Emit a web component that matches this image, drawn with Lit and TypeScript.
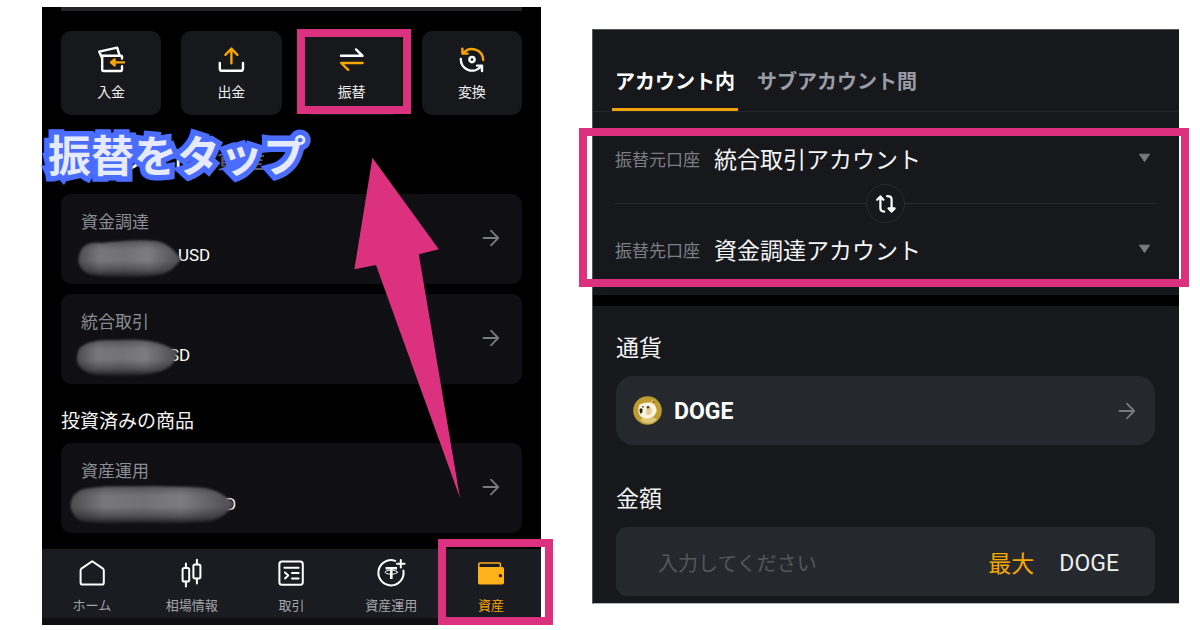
import { LitElement, html, svg, css, nothing } from "lit";
import { customElement, property, state } from "lit/decorators.js";
import { classMap } from "lit/directives/class-map.js";

const icons: Record<string, unknown> = {
  deposit: svg`
    <path class="w" d="M5.2 12.5 2.2 5.6 20.2 1.6 22.6 9.6M25 12.6V10.6Q25 9.7 24 9.7H5.2V23.6Q5.2 25 6.6 25H23.6Q25 25 25 23.6V20.2"/>
    <path class="o" d="M27 16.4H15M17.6 13.4 14 16.4 17.6 19.4Z"/>`,
  withdraw: svg`
    <path class="w" d="M2.8 17V22.4Q2.8 24.8 5.2 24.8H23.6Q26 24.8 26 22.4V17"/>
    <path class="o" d="M14.4 17.2V2.6M8.4 8.8 14.4 2.6 20.4 8.8"/>`,
  transfer: svg`
    <path class="w" d="M3 9.8H24.6L18 3.4"/>
    <path class="o" d="M24.6 17H3.2L10.2 23.8"/>`,
  convert: svg`
    <path class="o" d="M4.4 2.6V7.6H9.6M5.2 7.2A11.3 11.3 0 0 1 25.2 14"/>
    <path class="w" d="M24 25V19.6H19M2.8 13A11.3 11.3 0 0 0 22.6 20.8"/>
    <circle class="w" cx="14" cy="13.6" r="2.6"/>`,
  home: svg`<path class="w" d="M14.2 2.2 25 9.6Q25.8 10.4 25.8 11.4V23.4Q25.8 25.6 23.6 25.6H4.8Q2.6 25.6 2.6 23.4V11.4Q2.6 10.4 3.4 9.6Z"/>`,
  market: svg`
    <rect class="w" x="4.6" y="9" width="6.6" height="13.6" rx="1.6"/>
    <rect class="w" x="15.4" y="5.4" width="7" height="14" rx="1.6"/>
    <path class="w" d="M7.9 4.4V9M7.9 22.6V27.4M18.9 .8V5.4M18.9 19.4V24.4"/>`,
  trade: svg`
    <rect class="w" x="2.4" y="2.4" width="23.4" height="23.4" rx="2.6"/>
    <path class="w" d="M7.4 8.8H21.6M15 14H21.6M15 19.4H21.6M8 13.4 11.2 16.4 8 19.4"/>`,
  earn: svg`
    <path class="w" d="M18.2 1.9A12.6 12.6 0 1 0 26.4 11.6"/>
    <path class="w" d="M23.8 1V8.6M20 4.8H27.6"/>
    <path class="t" d="M8.6 9.2H20M14.3 9.2V20"/>
    <ellipse class="thin" cx="14.3" cy="13.2" rx="6.2" ry="2"/>`,
  wallet: svg`
    <path class="f" d="M1 8H25.4Q27 8 27 9.6V23.8Q27 25.4 25.4 25.4H2.6Q1 25.4 1 23.8Z"/>
    <path class="g" d="M1.8 9V5.2Q1.8 4 3 4H22.2Q23.4 4 23.4 5.2V8"/>
    <circle class="dot" cx="23.4" cy="16.7" r="1.6"/>`,
};

const icon = (name: string) =>
  html`<svg class="icon ${name}" width="28" height="28" viewBox="0 0 28 28" aria-hidden="true">${icons[name]}</svg>`;

const arrow = html`<svg class="arrow" width="18" height="18" viewBox="0 0 18 18" aria-hidden="true">
  <path d="M1.5 9H16M9 1.6 16.2 9 9 16.4"/>
</svg>`;

const family = css`"Noto Sans CJK JP", "Noto Sans", sans-serif`;

const shared = css`
  * { box-sizing: border-box; }
  button, select, input {
    font: inherit; color: inherit; background: none; border: 0;
    margin: 0; padding: 0; border-radius: 0; outline: 0; text-align: left; appearance: none;
  }
  h2, h3, p { margin: 0; font-weight: 400; }
  svg { display: block; flex: none; }
  .arrow { fill: none; stroke: #777a7e; stroke-width: 1.8; stroke-linejoin: round; stroke-linecap: round; }
`;

interface Balance { label: string; offset: number; mask: { x: number; y: number; w: number; d: string } }

/* Redacted amounts: the smear covers the digits and leaves the unit partly visible. */
const balances: Record<string, Balance> = {
  funding: {
    label: "資金調達", offset: 97,
    mask: { x: 15, y: 45, w: 106, d: "M4 14C7 4 16 3 26 4C42 2 62 0 80 2C93 4 98 12 105 20C98 30 92 35 78 37C54 39 30 39 16 36C4 33 0 23 4 14Z" },
  },
  unified: {
    label: "統合取引", offset: 77,
    mask: { x: 15, y: 44, w: 102, d: "M3 11C9 4 20 2 34 2C50 2 60 1 74 3C87 5 94 10 101 13C100 22 98 27 88 32C76 37 60 38 40 38C24 38 12 37 5 30C-1 24 1 17 3 11Z" },
  },
  earn: {
    label: "資産運用", offset: 123,
    mask: { x: 8, y: 42, w: 166, d: "M14 4C36 0 60 2 84 1C104 2 118 1 136 3C148 5 158 12 165 18C162 24 156 32 142 36C122 39 96 38 74 38C46 38 24 40 12 36C-2 29 -2 10 14 4Z" },
  },
};

@customElement("balance-card")
class BalanceCard extends LitElement {
  @property({ attribute: false }) item!: Balance;

  static styles = [shared, css`
    :host { display: block; }
    .card {
      position: relative; display: flex; align-items: center; justify-content: space-between;
      width: 100%; padding: 15px 22px 17px 20px; border-radius: 10px; background: #101014; cursor: pointer;
    }
    .text { display: flex; flex-direction: column; gap: 10px; }
    .label { font-size: 17px; line-height: 24px; color: #8b8d95; }
    .value { display: flex; font: 17px/24px Roboto, sans-serif; color: #fff; }
    .mask { position: absolute; overflow: visible; }
    .mask g { filter: blur(1px); }
  `];

  render() {
    const { label, offset, mask } = this.item;
    return html`<button class="card">
      <span class="text">
        <span class="label">${label}</span>
        <span class="value"><span style="width:${offset}px"></span>USD</span>
      </span>
      ${arrow}
      <svg class="mask" style="left:${mask.x}px;top:${mask.y}px" width=${mask.w} height="40" viewBox="0 0 ${mask.w} 40" aria-hidden="true">
        <defs>
          <linearGradient id="v" x1="0" y1="0" x2="0" y2="1">
            <stop offset="0" stop-color="#58585a"/><stop offset=".25" stop-color="#7c7c7e"/>
            <stop offset=".55" stop-color="#7e7e80"/><stop offset=".82" stop-color="#525254"/><stop offset="1" stop-color="#1c1c20"/>
          </linearGradient>
          <linearGradient id="h" x1="0" y1="0" x2="1" y2="0">
            <stop offset="0" stop-color="#101014" stop-opacity=".45"/><stop offset=".2" stop-color="#101014" stop-opacity=".05"/>
            <stop offset=".45" stop-color="#101014" stop-opacity=".1"/><stop offset=".68" stop-color="#101014" stop-opacity="0"/>
            <stop offset="1" stop-color="#101014" stop-opacity=".45"/>
          </linearGradient>
        </defs>
        <g><path fill="url(#v)" d=${mask.d}/><path fill="url(#h)" d=${mask.d}/></g>
      </svg>
    </button>`;
  }
}

@customElement("wallet-screen")
class WalletScreen extends LitElement {
  static styles = [shared, css`
    :host { display: block; position: relative; background: #000; color: #fff; }
    .peek { height: 4px; margin: 0 19px; background: #252527; }
    .body { display: flex; flex-direction: column; padding: 20px 19px 16px; }
    .actions { display: grid; grid-template-columns: repeat(4, 1fr); gap: 20px; }
    .action {
      position: relative; display: flex; flex-direction: column; align-items: center; gap: 7px;
      padding: 15px 0 14px; border-radius: 10px; background: #17181c; color: #eee;
      font-size: 14px; line-height: 20px; cursor: pointer;
    }
    .action.marked::after {
      content: ""; position: absolute; inset: -2px -9px 1px -5px; border: 8px solid #dc317e;
    }
    .icon { fill: none; stroke-linecap: round; stroke-linejoin: round; overflow: visible; }
    .w { stroke: #fff; stroke-width: 2.4; }
    .o { stroke: #f7a600; stroke-width: 2.4; }
    .tab .w { stroke-width: 2; }
    .t { stroke: #fff; stroke-width: 2.6; stroke-linecap: butt; }
    .thin { stroke: #fff; stroke-width: 1; }
    .deposit .o { fill: #f7a600; }
    .f { fill: #ffb11a; }
    .g { stroke: #ffb11a; stroke-width: 1.5; }
    .dot { fill: #1b1b22; }
    .views { display: flex; gap: 24px; margin: 28px 0 21px; padding-left: 12px; font-size: 24px; line-height: 30px; font-weight: 500; }
    .views .off { color: #5c5d63; }
    .cards { display: grid; gap: 10px; }
    .heading { margin: 22px 0 9px; font-size: 19px; line-height: 28px; color: #f2f2f2; }
    .tabs { display: grid; grid-template-columns: repeat(5, 1fr); background: #1b1b22; border-bottom: 7px solid #0f0f14; }
    .tab {
      position: relative; display: flex; flex-direction: column; align-items: center; gap: 8px;
      padding: 10px 0 3px; font-size: 13px; line-height: 20px; color: #a4a5aa; cursor: pointer;
    }
    .tab.active { color: #f7a600; }
    .tab.active::after {
      content: ""; position: absolute; inset: -10px -12px -7px -3px; border: 8px solid #dc317e;
    }
    .callout {
      position: absolute; left: 6px; top: 115px; white-space: nowrap; font-size: 43px; line-height: 62px; font-weight: 700;
      color: #e6eaff; -webkit-text-stroke: 11px #4a6dff; paint-order: stroke fill; stroke-linejoin: miter;
    }
    .pointer { position: absolute; left: 312px; top: 150px; fill: #dc317e; pointer-events: none; }
  `];

  private actions = [
    { id: "deposit", label: "入金" },
    { id: "withdraw", label: "出金" },
    { id: "transfer", label: "振替", marked: true },
    { id: "convert", label: "変換" },
  ];

  @state() private tab = "wallet";

  private tabs = [
    { id: "home", label: "ホーム" },
    { id: "market", label: "相場情報" },
    { id: "trade", label: "取引" },
    { id: "earn", label: "資産運用" },
    { id: "wallet", label: "資産" },
  ];

  render() {
    return html`
      <div class="peek"></div>
      <div class="body">
        <div class="actions">
          ${this.actions.map((a) => html`<button class=${classMap({ action: true, marked: !!a.marked })}>${icon(a.id)}<span>${a.label}</span></button>`)}
        </div>
        <div class="views"><span>アカウント</span><span class="off">資産</span></div>
        <div class="cards">
          <balance-card .item=${balances.funding}></balance-card>
          <balance-card .item=${balances.unified}></balance-card>
        </div>
        <h2 class="heading">投資済みの商品</h2>
        <balance-card .item=${balances.earn}></balance-card>
      </div>
      <nav class="tabs">
        ${this.tabs.map((t) => html`<button
          class=${classMap({ tab: true, active: t.id === this.tab })}
          aria-current=${t.id === this.tab ? "page" : nothing}
          @click=${() => (this.tab = t.id)}>${icon(t.id)}<span>${t.label}</span></button>`)}
      </nav>
      <p class="callout">振替をタップ</p>
      <svg class="pointer" width="108" height="342" viewBox="0 0 108 342" aria-hidden="true">
        <path d="M18.4 .7 84.8 92.3 64.8 97.3 106 341 22 108 .4 112.3Z"/>
      </svg>`;
  }
}

@customElement("transfer-screen")
class TransferScreen extends LitElement {
  @state() private scope = 0;
  @state() private amount = "";

  private accounts = ["統合取引アカウント", "資金調達アカウント"];

  static styles = [shared, css`
    :host {
      display: block; background: #000; color: #f4f4f5;
      border: solid #55565a; border-width: 1px 0 1px 1px; border-bottom-color: #b4b4bc;
    }
    .scopes { display: flex; gap: 16px; padding: 37px 19px 0; background: #17181c; border-bottom: 1px solid #25272b; }
    .scope {
      padding: 0 3px 13px; border-bottom: 3px solid transparent; color: #9a9ca5;
      font-size: 20px; line-height: 28px; font-weight: 700; white-space: nowrap; cursor: pointer;
    }
    .scope.on { color: #fff; border-color: #f0a20a; }
    .route { position: relative; padding: 29px 23px 27px 22px; background: #17181c; }
    .route::after { content: ""; position: absolute; inset: 16px -10px 8px -14px; border: 8px solid #dc317e; pointer-events: none; }
    .row { display: grid; grid-template-columns: auto 1fr; align-items: center; gap: 14px; }
    .row label { font-size: 17px; line-height: 36px; color: #7d7f87; }
    .picker { display: grid; align-items: center; }
    .picker > * { grid-area: 1 / 1; }
    .picker select { width: 100%; height: 36px; padding-bottom: 4px; font-size: 23px; cursor: pointer; }
    .picker svg { justify-self: end; margin: 0 5px 2px 0; fill: #77797e; stroke: #77797e; stroke-linejoin: round; pointer-events: none; }
    .divider { display: flex; align-items: center; margin: 7px 0 9px; }
    .divider::before, .divider::after { content: ""; flex: 1; height: 1px; background: #2a2c30; }
    .swap { display: grid; place-items: center; width: 39px; height: 39px; border: 1px solid #2a2c30; border-radius: 50%; cursor: pointer; }
    .swap svg { fill: none; stroke: #fff; stroke-width: 2.2; stroke-linecap: round; stroke-linejoin: round; }
    .form { margin-top: 11px; padding: 24px 24px 7px 23px; background: #17181c; }
    .caption { display: block; margin-bottom: 14px; font-size: 23px; line-height: 32px; }
    .field { display: flex; align-items: center; width: 100%; height: 69px; background: #25282c; }
    .coin { gap: 12px; margin-bottom: 36px; padding: 0 19px 0 17px; border-radius: 17px; cursor: pointer; }
    .coin .name { flex: 1; padding-top: 2px; font: 700 23px/28px Roboto, sans-serif; color: #fff; }
    .amount { gap: 25px; padding: 0 36px 0 42px; border-radius: 11px; font-size: 23px; }
    .amount input { flex: 1; min-width: 0; padding-top: 2px; font-size: 20px; line-height: 28px; }
    .amount input::placeholder { color: #54575c; opacity: 1; }
    .max { color: #f7a600; cursor: pointer; }
    .unit { padding-top: 4px; font-family: Roboto, sans-serif; color: #eee; }
  `];

  private picker(id: string, label: string, value: string) {
    return html`<div class="row">
      <label for=${id}>${label}</label>
      <span class="picker">
        <select id=${id}>
          ${this.accounts.map((a) => html`<option ?selected=${a === value}>${a}</option>`)}
        </select>
        <svg width="13" height="10" viewBox="0 0 13 10" aria-hidden="true"><path d="M1.4 1.2H11.6L6.5 8.6Z"/></svg>
      </span>
    </div>`;
  }

  private swap() {
    this.accounts = [...this.accounts].reverse();
    this.requestUpdate();
  }

  render() {
    return html`
      <div class="scopes" role="tablist">
        ${["アカウント内", "サブアカウント間"].map((s, i) => html`<button role="tab"
          aria-selected=${i === this.scope} class=${classMap({ scope: true, on: i === this.scope })}
          @click=${() => (this.scope = i)}>${s}</button>`)}
      </div>
      <section class="route">
        ${this.picker("from", "振替元口座", this.accounts[0])}
        <div class="divider">
          <button class="swap" aria-label="入れ替え" @click=${this.swap}>
            <svg width="20" height="18" viewBox="0 0 20 18" aria-hidden="true">
              <path d="M1.2 4.8 4.4 1.4 7.4 4.8M4.4 2V13.6Q4.4 16.6 8.2 16.6M11.2 1.2Q15.6 1.2 15.6 4.4V15M12.6 13.4H18.6L15.6 16.6Z"/>
            </svg>
          </button>
        </div>
        ${this.picker("to", "振替先口座", this.accounts[1])}
      </section>
      <section class="form">
        <span class="caption" id="coin-caption">通貨</span>
        <button class="field coin" aria-labelledby="coin-caption coin-name">
          <svg width="29" height="29" viewBox="0 0 29 29" aria-hidden="true">
            <circle cx="14.5" cy="14.5" r="14.3" fill="#bd9c30"/>
            <path d="M7 24Q12 20 22 22L24 24Q15 31 7 24Z" fill="#dcc777"/>
            <path d="M16 6.5 20.6 3.4 22 9 16 9Z" fill="#d8b766"/>
            <path d="M6.6 8.4Q14 5.2 20 7.6 24.4 11 23.4 16 21 22.4 14 22.6 7 22.6 5.4 16 5 11 6.6 8.4Z" fill="#f9f3e0"/>
            <path d="M13.4 9.8H15.4Q19 10.6 18.8 15 18.4 18.6 15.4 19H13.4Z" fill="#e3cd8e"/>
            <path d="M6.6 13Q8.8 11 9.6 13.8 9.6 17.4 7.8 17.8 6 16 6.6 13Z" fill="#2a2519"/>
            <circle cx="10" cy="10.8" r=".9" fill="#473b22"/><circle cx="15" cy="11.2" r="1.2" fill="#473b22"/>
            <path d="M19.4 6.4 21.2 4.4 21.4 7.6Z" fill="#7c4f23"/>
          </svg>
          <span class="name" id="coin-name">DOGE</span>
          ${arrow}
        </button>
        <label class="caption" for="amount">金額</label>
        <div class="field amount">
          <input id="amount" inputmode="decimal" placeholder="入力してください" .value=${this.amount}
            @input=${(e: Event) => (this.amount = (e.target as HTMLInputElement).value)}>
          <button class="max">最大</button>
          <span class="unit">DOGE</span>
        </div>
      </section>`;
  }
}

@customElement("app-root")
class AppRoot extends LitElement {
  static styles = css`
    :host {
      display: block; min-height: 100vh; box-sizing: border-box; padding: 7px 21px 5px 42px;
      background: #fff; font-family: ${family};
    }
    .page { display: grid; grid-template-columns: 499fr 587fr; gap: 51px; align-items: start; }
    .second { margin-top: 22px; }
  `;

  render() {
    return html`<main class="page">
      <wallet-screen></wallet-screen>
      <transfer-screen class="second"></transfer-screen>
    </main>`;
  }
}
